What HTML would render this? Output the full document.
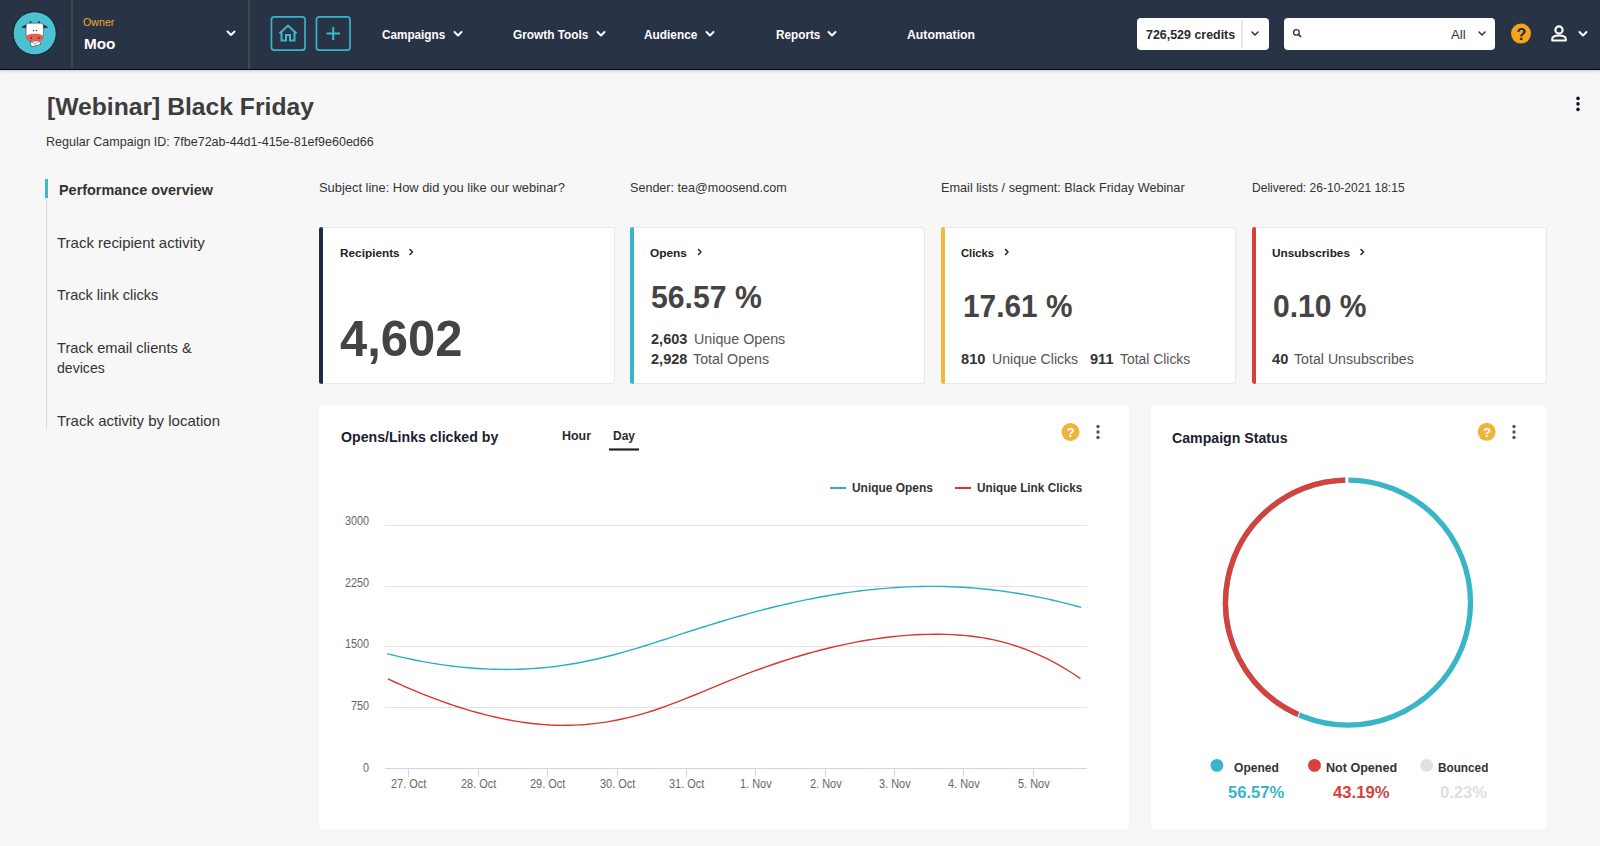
<!DOCTYPE html>
<html><head><meta charset="utf-8">
<style>
*{margin:0;padding:0;box-sizing:border-box}
html,body{width:1600px;height:846px;overflow:hidden;background:#f7f7f7;font-family:"Liberation Sans",sans-serif;color:#333}
.a{position:absolute;white-space:nowrap;line-height:1;transform-origin:0 0}
#hdr{position:absolute;left:0;top:0;width:1600px;height:70px;background:#293346;border-bottom:1px solid #00002a;box-shadow:0 1px 3px rgba(0,0,0,.18)}
.sep{position:absolute;top:0;width:2px;height:69px;background:#46464a}
.card{position:absolute;background:#fff;border:1px solid #e8e8e8;border-left:0;border-radius:3px;top:227px;width:296px;height:157px}
.acc{position:absolute;left:0;top:-1px;bottom:-1px;width:4px;border-radius:3px 2px 2px 3px}
.panel{position:absolute;background:#fff;border-radius:3px;top:406px;height:423px}
</style></head><body>
<div id="hdr">
  <div class="sep" style="left:71px"></div>
  <div class="sep" style="left:248px"></div>
      <div class="a" style="left:1137px;top:18px;width:132px;height:31.5px;background:#fff;border-radius:4px"></div>
  <div class="a" style="left:1241px;top:19.5px;width:2px;height:28.5px;background:#e6e6e6"></div>
  <div class="a" style="left:1284px;top:18px;width:211px;height:31.5px;background:#fff;border-radius:4px"></div>
</div>
<!-- sidebar -->
<div class="a" style="left:46px;top:179px;width:1px;height:250px;background:#d9d9d9"></div>
<div class="a" style="left:45px;top:179px;width:3px;height:19px;background:#3db8cb"></div>
<!-- cards -->
<div class="card" style="left:319px"><div class="acc" style="background:#1d2945"></div></div>
<div class="card" style="left:630px;width:295px"><div class="acc" style="background:#3ab5c8"></div></div>
<div class="card" style="left:941px;width:295px"><div class="acc" style="background:#f0b83d"></div></div>
<div class="card" style="left:1252px;width:295px"><div class="acc" style="background:#d8413b"></div></div>
<!-- panels -->
<div class="panel" style="left:319px;width:810px"></div>
<div class="panel" style="left:1151px;width:395px"></div>
<svg class="a" style="left:0;top:0" width="1600" height="846" viewBox="0 0 1600 846">
  <!-- logo -->
  <circle cx="34.7" cy="33.3" r="21.6" fill="#4bc2d2" stroke="#141a2a" stroke-width="1"/>
  <path d="M26.5,24.6 Q23,25.5 21.3,27.5 L26.5,28.4 Z M43,24.6 Q46.5,25.5 48.2,27.5 L43,28.4 Z" fill="#2a3040"/>
  <circle cx="30.5" cy="22.4" r="1.1" fill="#2a3040"/><circle cx="39.2" cy="22.4" r="1.1" fill="#2a3040"/>
  <path d="M26.1,36 V26 Q26.1,23.2 28.9,23.2 H40.6 Q43.4,23.2 43.4,26 V36 Z" fill="#fff" stroke="#2a3040" stroke-width="0.5"/>
  <circle cx="33.5" cy="30.4" r="0.75" fill="#2a3040"/><circle cx="36.5" cy="30.4" r="0.75" fill="#2a3040"/>
  <path d="M30,41.4 L39.4,40.6 L40.6,44.4 L31.4,46.8 Z" fill="#fff" stroke="#2a3040" stroke-width="0.6"/>
  <path d="M30,41.4 L35.5,44 L39.4,40.6" fill="none" stroke="#2a3040" stroke-width="0.5"/>
  <path d="M26.1,37.4 Q26.1,33.9 34.75,33.8 Q43.4,33.9 43.4,37.4 Q43.4,40.7 40.2,40.7 H29.3 Q26.1,40.7 26.1,37.4 Z" fill="#e8604c"/>
  <ellipse cx="31.3" cy="38" rx="0.8" ry="1.1" fill="#2a3040" transform="rotate(-20 31.3 38)"/>
  <ellipse cx="38.9" cy="38" rx="0.8" ry="1.1" fill="#2a3040" transform="rotate(20 38.9 38)"/>
  <!-- header chevrons -->
  <g fill="none" stroke="#fff" stroke-width="2" stroke-linecap="round" stroke-linejoin="round">
    <path d="M227.5,31.5 L231,35 L234.5,31.5"/>
    <path d="M454.5,32 L458,35.5 L461.5,32"/>
    <path d="M597.5,32 L601,35.5 L604.5,32"/>
    <path d="M706.5,32 L710,35.5 L713.5,32"/>
    <path d="M828.5,32 L832,35.5 L835.5,32"/>
  </g>
  <g fill="none" stroke="#333" stroke-width="1.5" stroke-linecap="round" stroke-linejoin="round">
    <path d="M1252,32 L1255,35 L1258,32"/>
    <path d="M1479,32 L1482,35 L1485,32"/>
  </g>
  <circle cx="1296.4" cy="32.4" r="2.8" fill="none" stroke="#333" stroke-width="1.3"/>
  <path d="M1298.4,34.4 L1300.8,36.8" stroke="#333" stroke-width="1.5" stroke-linecap="round"/>
  <!-- home / plus -->
  <rect x="271.45" y="16.85" width="33.6" height="33.3" rx="3" fill="none" stroke="#38b4c8" stroke-width="1.7"/>
  <rect x="316.45" y="16.85" width="33.6" height="33.3" rx="3" fill="none" stroke="#38b4c8" stroke-width="1.7"/>
  <g fill="none" stroke="#3db8cb" stroke-width="2" stroke-linejoin="miter">
    <path d="M279.5,33.5 L288,25.5 L296.5,33.5 M281.5,32 L281.5,40.5 L286,40.5 L286,35 L290,35 L290,40.5 L294.5,40.5 L294.5,32"/>
    <path d="M326.5,33.5 L340,33.5 M333.2,27 L333.2,40"/>
  </g>
  <!-- help -->
  <circle cx="1521" cy="33.6" r="10" fill="#f7a21b"/>
  <text x="1521.3" y="39.6" font-family="Liberation Sans" font-weight="bold" font-size="16" text-anchor="middle" fill="#1e2538">?</text>
  <!-- user -->
  <circle cx="1559" cy="30" r="3.6" fill="none" stroke="#fff" stroke-width="2.2"/>
  <path d="M1552.2,40.6 V39.2 Q1552.2,35.6 1559,35.6 Q1565.8,35.6 1565.8,39.2 V40.6 Z" fill="none" stroke="#fff" stroke-width="2" stroke-linejoin="round"/>
  <path d="M1579.5,32 L1583,35.5 L1586.5,32" fill="none" stroke="#fff" stroke-width="2" stroke-linecap="round" stroke-linejoin="round"/>
  <!-- page kebab -->
  <g fill="#0d1430"><circle cx="1578" cy="98.4" r="1.8"/><circle cx="1578" cy="103.9" r="1.8"/><circle cx="1578" cy="109.4" r="1.8"/></g>
  <!-- card chevrons -->
  <g fill="none" stroke="#222" stroke-width="1.5" stroke-linecap="round" stroke-linejoin="round">
    <path d="M410,249.5 L412.5,252 L410,254.5"/>
    <path d="M698.5,249.5 L701,252 L698.5,254.5"/>
    <path d="M1005.5,249.5 L1008,252 L1005.5,254.5"/>
    <path d="M1361,249.5 L1363.5,252 L1361,254.5"/>
  </g>
  <!-- chart -->
  <g stroke="#e3e3e3" stroke-width="1">
    <path d="M385,525.5 H1087 M385,586.5 H1087 M385,646.5 H1087 M385,707.5 H1087"/>
  </g>
  <path d="M385,768.5 H1087" stroke="#ccd6eb" stroke-width="1"/>
  <g stroke="#ccd6eb" stroke-width="1">
    <path d="M408.5,768 V777 M478.5,768 V777 M547.5,768 V777 M617.5,768 V777 M686.5,768 V777 M755.5,768 V777 M825.5,768 V777 M894.5,768 V777 M963.5,768 V777 M1033.5,768 V777"/>
  </g>
  <path d="M387.0,653.61 393.0,655.12 399.0,656.56 405.0,657.93 411.0,659.22 417.0,660.45 423.0,661.59 429.0,662.67 435.0,663.67 441.0,664.59 447.0,665.43 453.0,666.20 459.0,666.88 465.0,667.49 471.0,668.02 477.0,668.46 483.0,668.82 489.0,669.10 495.0,669.30 501.0,669.41 507.0,669.43 513.0,669.37 519.0,669.22 525.0,668.98 531.0,668.65 537.0,668.24 543.0,667.73 549.0,667.13 555.0,666.44 561.0,665.65 567.0,664.77 573.0,663.80 579.0,662.73 585.0,661.56 591.0,660.31 597.0,658.96 603.0,657.53 609.0,656.03 615.0,654.45 621.0,652.81 627.0,651.11 633.0,649.36 639.0,647.56 645.0,645.72 651.0,643.84 657.0,641.93 663.0,639.99 669.0,638.05 675.0,636.09 681.0,634.14 687.0,632.19 693.0,630.26 699.0,628.35 705.0,626.47 711.0,624.61 717.0,622.77 723.0,620.97 729.0,619.19 735.0,617.45 741.0,615.74 747.0,614.07 753.0,612.43 759.0,610.83 765.0,609.28 771.0,607.76 777.0,606.29 783.0,604.86 789.0,603.48 795.0,602.15 801.0,600.86 807.0,599.63 813.0,598.44 819.0,597.30 825.0,596.21 831.0,595.18 837.0,594.20 843.0,593.27 849.0,592.39 855.0,591.57 861.0,590.81 867.0,590.11 873.0,589.46 879.0,588.87 885.0,588.34 891.0,587.87 897.0,587.47 903.0,587.12 909.0,586.84 915.0,586.63 921.0,586.48 927.0,586.39 933.0,586.37 939.0,586.42 945.0,586.54 951.0,586.73 957.0,586.98 963.0,587.31 969.0,587.70 975.0,588.16 981.0,588.69 987.0,589.28 993.0,589.94 999.0,590.68 1005.0,591.47 1011.0,592.34 1017.0,593.27 1023.0,594.27 1029.0,595.33 1035.0,596.46 1041.0,597.66 1047.0,598.93 1053.0,600.26 1059.0,601.65 1065.0,603.11 1071.0,604.64 1077.0,606.23 1081.2,607.38" fill="none" stroke="#27afc3" stroke-width="1.4"/>
  <path d="M388.0,678.98 394.0,681.75 400.0,684.45 406.0,687.09 412.0,689.65 418.0,692.15 424.0,694.58 430.0,696.93 436.0,699.20 442.0,701.39 448.0,703.51 454.0,705.54 460.0,707.48 466.0,709.34 472.0,711.11 478.0,712.79 484.0,714.38 490.0,715.87 496.0,717.27 502.0,718.56 508.0,719.75 514.0,720.84 520.0,721.82 526.0,722.69 532.0,723.44 538.0,724.07 544.0,724.58 550.0,724.97 556.0,725.22 562.0,725.34 568.0,725.32 574.0,725.17 580.0,724.87 586.0,724.44 592.0,723.87 598.0,723.17 604.0,722.33 610.0,721.36 616.0,720.26 622.0,719.03 628.0,717.67 634.0,716.18 640.0,714.57 646.0,712.83 652.0,710.96 658.0,708.98 664.0,706.89 670.0,704.70 676.0,702.43 682.0,700.09 688.0,697.70 694.0,695.26 700.0,692.79 706.0,690.31 712.0,687.82 718.0,685.33 724.0,682.87 730.0,680.43 736.0,678.05 742.0,675.71 748.0,673.41 754.0,671.17 760.0,668.99 766.0,666.85 772.0,664.77 778.0,662.75 784.0,660.78 790.0,658.87 796.0,657.02 802.0,655.24 808.0,653.51 814.0,651.85 820.0,650.26 826.0,648.73 832.0,647.27 838.0,645.89 844.0,644.57 850.0,643.32 856.0,642.15 862.0,641.06 868.0,640.04 874.0,639.10 880.0,638.23 886.0,637.45 892.0,636.75 898.0,636.14 904.0,635.61 910.0,635.16 916.0,634.80 922.0,634.54 928.0,634.36 934.0,634.27 940.0,634.28 946.0,634.39 952.0,634.61 958.0,634.95 964.0,635.42 970.0,636.02 976.0,636.76 982.0,637.66 988.0,638.71 994.0,639.92 1000.0,641.31 1006.0,642.88 1012.0,644.64 1018.0,646.59 1024.0,648.72 1030.0,651.05 1036.0,653.58 1042.0,656.30 1048.0,659.23 1054.0,662.37 1060.0,665.71 1066.0,669.27 1072.0,673.03 1078.0,677.02 1080.4,678.68" fill="none" stroke="#d8362e" stroke-width="1.4"/>
  <path d="M830,488 H846" stroke="#27b0c4" stroke-width="2"/>
  <path d="M955,488 H971" stroke="#d9342b" stroke-width="2"/>
  <path d="M609,449.5 H639" stroke="#1c2333" stroke-width="2.2"/>
  <circle cx="1070.5" cy="432" r="9" fill="#f2b33d"/>
  <text x="1070.8" y="436.8" font-family="Liberation Sans" font-weight="bold" font-size="13" text-anchor="middle" fill="#fff">?</text>
  <g fill="#555"><circle cx="1098" cy="426.5" r="1.7"/><circle cx="1098" cy="432" r="1.7"/><circle cx="1098" cy="437.5" r="1.7"/></g>
  <circle cx="1486.7" cy="431.8" r="9" fill="#f2b33d"/>
  <text x="1487" y="436.6" font-family="Liberation Sans" font-weight="bold" font-size="13" text-anchor="middle" fill="#fff">?</text>
  <g fill="#555"><circle cx="1514" cy="426.5" r="1.7"/><circle cx="1514" cy="432" r="1.7"/><circle cx="1514" cy="437.5" r="1.7"/></g>
  <!-- donut -->
  <circle cx="1348" cy="602.6" r="122.5" fill="none" stroke="#3ab5c8" stroke-width="5.3"/>
  <path d="M1298.37,714.60 A122.5,122.5 0 0 1 1345.22,480.13" fill="none" stroke="#d8413b" stroke-width="5.3"/>
  <path d="M1346.9,474 V485" stroke="#fff" stroke-width="3"/>
  <path d="M1300.57,710.65 L1296.95,718.89" stroke="#fff" stroke-width="1"/>
  <circle cx="1216.9" cy="765.4" r="6.4" fill="#3ab5c8"/>
  <circle cx="1314.5" cy="765.4" r="6.4" fill="#d8413b"/>
  <circle cx="1426.7" cy="765.4" r="6.4" fill="#e0e0e0"/>
</svg>
<div class="a" style="left:83.00px;top:17.79px;font-size:10.29px;font-weight:normal;color:#f0ad32;transform:scaleX(1.0365);">Owner</div>
<div class="a" style="left:83.50px;top:36.40px;font-size:15.00px;font-weight:bold;color:#fff;transform:scaleX(1.0188);">Moo</div>
<div class="a" style="left:382.00px;top:28.92px;font-size:12.86px;font-weight:bold;color:#fff;transform:scaleX(0.9119);">Campaigns</div>
<div class="a" style="left:513.10px;top:28.92px;font-size:12.86px;font-weight:bold;color:#fff;transform:scaleX(0.9207);">Growth Tools</div>
<div class="a" style="left:644.40px;top:28.92px;font-size:12.86px;font-weight:bold;color:#fff;transform:scaleX(0.9210);">Audience</div>
<div class="a" style="left:775.60px;top:28.92px;font-size:12.86px;font-weight:bold;color:#fff;transform:scaleX(0.9140);">Reports</div>
<div class="a" style="left:906.80px;top:28.92px;font-size:12.86px;font-weight:bold;color:#fff;transform:scaleX(0.9521);">Automation</div>
<div class="a" style="left:1145.70px;top:28.88px;font-size:12.43px;font-weight:bold;color:#2b2b2b;transform:scaleX(1.0007);">726,529 credits</div>
<div class="a" style="left:1451.00px;top:28.43px;font-size:13.43px;font-weight:normal;color:#333;transform:scaleX(0.9783);">All</div>
<div class="a" style="left:47.00px;top:95.00px;font-size:24.57px;font-weight:bold;color:#3d3d3d;transform:scaleX(1.0045);">[Webinar] Black Friday</div>
<div class="a" style="left:46.25px;top:135.56px;font-size:12.57px;font-weight:normal;color:#333;transform:scaleX(0.9963);">Regular Campaign ID: 7fbe72ab-44d1-415e-81ef9e60ed66</div>
<div class="a" style="left:58.50px;top:183.11px;font-size:14.29px;font-weight:bold;color:#333;transform:scaleX(1.0101);">Performance overview</div>
<div class="a" style="left:57.25px;top:235.59px;font-size:14.71px;font-weight:normal;color:#333;transform:scaleX(1.0189);">Track recipient activity</div>
<div class="a" style="left:57.40px;top:288.14px;font-size:14.71px;font-weight:normal;color:#333;transform:scaleX(0.9886);">Track link clicks</div>
<div class="a" style="left:57.40px;top:341.14px;font-size:14.71px;font-weight:normal;color:#333;transform:scaleX(0.9971);">Track email clients &amp;</div>
<div class="a" style="left:57.40px;top:360.94px;font-size:14.71px;font-weight:normal;color:#333;transform:scaleX(0.9581);">devices</div>
<div class="a" style="left:57.40px;top:413.94px;font-size:14.71px;font-weight:normal;color:#333;transform:scaleX(1.0211);">Track activity by location</div>
<div class="a" style="left:319.10px;top:182.35px;font-size:12.64px;font-weight:normal;color:#333;transform:scaleX(1.0213);">Subject line: How did you like our webinar?</div>
<div class="a" style="left:630.00px;top:182.35px;font-size:12.64px;font-weight:normal;color:#333;transform:scaleX(0.9961);">Sender: tea@moosend.com</div>
<div class="a" style="left:941.00px;top:182.35px;font-size:12.64px;font-weight:normal;color:#333;transform:scaleX(1.0046);">Email lists / segment: Black Friday Webinar</div>
<div class="a" style="left:1252.00px;top:182.35px;font-size:12.64px;font-weight:normal;color:#333;transform:scaleX(0.9535);">Delivered: 26-10-2021 18:15</div>
<div class="a" style="left:339.50px;top:248.03px;font-size:11.43px;font-weight:bold;color:#222;transform:scaleX(1.0329);">Recipients</div>
<div class="a" style="left:649.80px;top:248.03px;font-size:11.43px;font-weight:bold;color:#222;transform:scaleX(1.0404);">Opens</div>
<div class="a" style="left:960.90px;top:248.03px;font-size:11.43px;font-weight:bold;color:#222;transform:scaleX(0.9830);">Clicks</div>
<div class="a" style="left:1271.70px;top:248.03px;font-size:11.43px;font-weight:bold;color:#222;transform:scaleX(1.0320);">Unsubscribes</div>
<div class="a" style="left:340.00px;top:314.36px;font-size:49.43px;font-weight:bold;color:#444;transform:scaleX(0.9903);">4,602</div>
<div class="a" style="left:651.20px;top:281.55px;font-size:31.71px;font-weight:bold;color:#444;transform:scaleX(0.9521);">56.57 %</div>
<div class="a" style="left:963.30px;top:291.13px;font-size:31.86px;font-weight:bold;color:#444;transform:scaleX(0.9359);">17.61 %</div>
<div class="a" style="left:1272.50px;top:291.13px;font-size:31.86px;font-weight:bold;color:#444;transform:scaleX(0.9427);">0.10 %</div>
<div class="a" style="left:650.60px;top:332.49px;font-size:14.43px;font-weight:bold;color:#333;transform:scaleX(1.0081);">2,603</div>
<div class="a" style="left:693.80px;top:332.49px;font-size:14.43px;font-weight:normal;color:#555;transform:scaleX(0.9898);">Unique Opens</div>
<div class="a" style="left:650.60px;top:351.99px;font-size:14.43px;font-weight:bold;color:#333;transform:scaleX(1.0081);">2,928</div>
<div class="a" style="left:693.20px;top:351.99px;font-size:14.43px;font-weight:normal;color:#555;transform:scaleX(0.9896);">Total Opens</div>
<div class="a" style="left:961.25px;top:351.99px;font-size:14.43px;font-weight:bold;color:#333;transform:scaleX(1.0135);">810</div>
<div class="a" style="left:991.90px;top:351.99px;font-size:14.43px;font-weight:normal;color:#555;transform:scaleX(0.9772);">Unique Clicks</div>
<div class="a" style="left:1089.80px;top:351.99px;font-size:14.43px;font-weight:bold;color:#333;transform:scaleX(1.0095);">911</div>
<div class="a" style="left:1120.30px;top:351.99px;font-size:14.43px;font-weight:normal;color:#555;transform:scaleX(0.9635);">Total Clicks</div>
<div class="a" style="left:1272.00px;top:351.99px;font-size:14.43px;font-weight:bold;color:#333;transform:scaleX(1.0156);">40</div>
<div class="a" style="left:1294.20px;top:351.99px;font-size:14.43px;font-weight:normal;color:#555;transform:scaleX(0.9828);">Total Unsubscribes</div>
<div class="a" style="left:340.60px;top:430.07px;font-size:14.57px;font-weight:bold;color:#1a2030;transform:scaleX(0.9718);">Opens/Links clicked by</div>
<div class="a" style="left:561.60px;top:429.92px;font-size:12.86px;font-weight:bold;color:#2b2b2b;transform:scaleX(0.9668);">Hour</div>
<div class="a" style="left:612.60px;top:429.92px;font-size:12.86px;font-weight:bold;color:#2b2b2b;transform:scaleX(0.9327);">Day</div>
<div class="a" style="left:852.00px;top:482.06px;font-size:12.57px;font-weight:bold;color:#333;transform:scaleX(0.9505);">Unique Opens</div>
<div class="a" style="left:976.90px;top:482.06px;font-size:12.57px;font-weight:bold;color:#333;transform:scaleX(0.9371);">Unique Link Clicks</div>
<div class="a" style="left:344.90px;top:516.46px;font-size:11.86px;font-weight:normal;color:#666;transform:scaleX(0.9136);">3000</div>
<div class="a" style="left:344.90px;top:577.66px;font-size:11.86px;font-weight:normal;color:#666;transform:scaleX(0.9136);">2250</div>
<div class="a" style="left:344.90px;top:639.36px;font-size:11.86px;font-weight:normal;color:#666;transform:scaleX(0.9136);">1500</div>
<div class="a" style="left:350.93px;top:701.46px;font-size:11.86px;font-weight:normal;color:#666;transform:scaleX(0.9136);">750</div>
<div class="a" style="left:362.98px;top:763.16px;font-size:11.86px;font-weight:normal;color:#666;transform:scaleX(0.9136);">0</div>
<div class="a" style="left:391.25px;top:778.42px;font-size:12.14px;font-weight:normal;color:#666;transform:scaleX(0.9018);">27. Oct</div>
<div class="a" style="left:461.15px;top:778.42px;font-size:12.14px;font-weight:normal;color:#666;transform:scaleX(0.9018);">28. Oct</div>
<div class="a" style="left:530.45px;top:778.42px;font-size:12.14px;font-weight:normal;color:#666;transform:scaleX(0.9018);">29. Oct</div>
<div class="a" style="left:599.75px;top:778.42px;font-size:12.14px;font-weight:normal;color:#666;transform:scaleX(0.9018);">30. Oct</div>
<div class="a" style="left:668.95px;top:778.42px;font-size:12.14px;font-weight:normal;color:#666;transform:scaleX(0.9018);">31. Oct</div>
<div class="a" style="left:740.08px;top:778.42px;font-size:12.14px;font-weight:normal;color:#666;transform:scaleX(0.9018);">1. Nov</div>
<div class="a" style="left:809.68px;top:778.42px;font-size:12.14px;font-weight:normal;color:#666;transform:scaleX(0.9018);">2. Nov</div>
<div class="a" style="left:879.18px;top:778.42px;font-size:12.14px;font-weight:normal;color:#666;transform:scaleX(0.9018);">3. Nov</div>
<div class="a" style="left:948.28px;top:778.42px;font-size:12.14px;font-weight:normal;color:#666;transform:scaleX(0.9018);">4. Nov</div>
<div class="a" style="left:1018.48px;top:778.42px;font-size:12.14px;font-weight:normal;color:#666;transform:scaleX(0.9018);">5. Nov</div>
<div class="a" style="left:1172.20px;top:430.51px;font-size:14.29px;font-weight:bold;color:#1a2030;transform:scaleX(0.9907);">Campaign Status</div>
<div class="a" style="left:1233.80px;top:761.72px;font-size:12.14px;font-weight:bold;color:#333;transform:scaleX(0.9955);">Opened</div>
<div class="a" style="left:1325.60px;top:761.72px;font-size:12.14px;font-weight:bold;color:#333;transform:scaleX(1.0362);">Not Opened</div>
<div class="a" style="left:1437.80px;top:761.72px;font-size:12.14px;font-weight:bold;color:#333;transform:scaleX(0.9702);">Bounced</div>
<div class="a" style="left:1228.10px;top:785.06px;font-size:16.00px;font-weight:bold;color:#3ab5c8;transform:scaleX(1.0375);">56.57%</div>
<div class="a" style="left:1332.80px;top:785.06px;font-size:16.00px;font-weight:bold;color:#d8413b;transform:scaleX(1.0430);">43.19%</div>
<div class="a" style="left:1439.70px;top:785.06px;font-size:16.00px;font-weight:bold;color:#e0e0e0;transform:scaleX(1.0338);">0.23%</div>
</body></html>
